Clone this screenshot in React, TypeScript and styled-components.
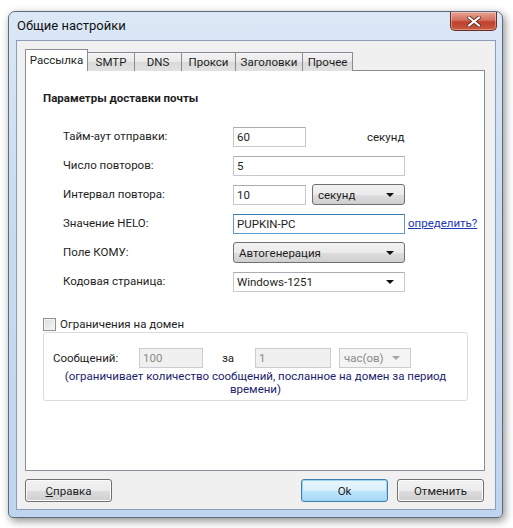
import React from 'react';
import styled, { createGlobalStyle, css } from 'styled-components';

const GlobalStyle = createGlobalStyle`
  html, body {
    margin: 0;
    padding: 0;
    background: #ffffff;
  }
  body {
    font-family: Roboto, 'Noto Sans', sans-serif;
    font-size: 11.5px;
    color: #1e1e1e;
  }
`;

const Screen = styled.div`
  width: 513px;
  height: 528px;
  padding: 11px 0 0 8px;
  box-sizing: border-box;
  overflow: hidden;
`;

const Window = styled.div`
  width: 495px;
  height: 507px;
  box-sizing: border-box;
  display: flex;
  flex-direction: column;
  border: 1px solid #5d6b7c;
  border-radius: 7px 7px 5px 5px;
  background: linear-gradient(180deg, #dbe8f6 0%, #c8dbf0 40%, #bfd5ee 100%);
  box-shadow: 2px 3px 8px rgba(0, 0, 0, 0.45);
`;

const TitleBar = styled.div`
  height: 28px;
  display: flex;
  align-items: flex-start;
  padding-left: 8px;
  padding-right: 5px;
`;

const Title = styled.span`
  margin-top: 6px;
  font-size: 13px;
  color: #111;
`;

const CloseButton = styled.div`
  margin-left: auto;
  width: 47px;
  height: 19px;
  box-sizing: border-box;
  border: 1px solid #6b2b24;
  border-top: none;
  border-radius: 0 0 5px 5px;
  background: linear-gradient(180deg, #e8a291 0%, #d4705e 45%, #c0402c 55%, #c85a40 100%);
  display: flex;
  align-items: center;
  justify-content: center;
  box-shadow: inset 0 0 0 1px rgba(255, 255, 255, 0.35);
`;

const Client = styled.div`
  flex: 1;
  margin: 0 6px 7px 7px;
  background: #f0f0f0;
  border: 1px solid #8b9fb8;
  display: flex;
  flex-direction: column;
  padding: 9px 10px 0 8px;
`;

const TabStrip = styled.div`
  display: flex;
  align-items: flex-end;
  height: 21px;
  position: relative;
  z-index: 1;
  margin-bottom: -1px;
`;

const Tab = styled.div<{ $active?: boolean; $w: number }>`
  width: ${({ $w }) => $w}px;
  box-sizing: border-box;
  height: 19px;
  border: 1px solid #898c95;
  border-bottom: none;
  margin-right: -1px;
  display: flex;
  align-items: center;
  justify-content: center;
  white-space: nowrap;
  background: linear-gradient(180deg, #f4f4f4 0%, #e9e9e9 50%, #d9d9d9 51%, #e2e2e2 100%);
  ${({ $active }) =>
    $active &&
    css`
      height: 22px;
      background: #ffffff;
      padding-bottom: 2px;
    `}
`;

const Panel = styled.div`
  height: 401px;
  box-sizing: border-box;
  background: #ffffff;
  border: 1px solid #898c95;
  padding: 19px 0 0 17px;
  display: flex;
  flex-direction: column;
`;

const Heading = styled.div`
  font-weight: bold;
  height: 17px;
  line-height: 17px;
`;

const Form = styled.div`
  margin-top: 19px;
  padding-left: 20px;
  display: grid;
  grid-template-columns: 170px 1fr;
  row-gap: 8px;
  align-items: center;
`;

const Label = styled.span`
  line-height: 21px;
`;

const Row = styled.div`
  display: flex;
  align-items: center;
  height: 21px;
`;

const TextInput = styled.div<{ $w: number; $focused?: boolean; $disabled?: boolean }>`
  width: ${({ $w }) => $w}px;
  height: 20px;
  box-sizing: border-box;
  border: 1px solid #c5c9cf;
  border-top-color: #abadb3;
  background: #fff;
  padding-left: 3px;
  display: flex;
  align-items: center;
  ${({ $focused }) =>
    $focused &&
    css`
      border-color: #5b9bd1;
      border-top-color: #3d7bad;
    `}
  ${({ $disabled }) =>
    $disabled &&
    css`
      background: #f0f0f0;
      border-color: #c9ccd0;
      color: #8a8a8a;
    `}
`;

const Combo = styled.div<{ $w: number; $plain?: boolean; $disabled?: boolean }>`
  width: ${({ $w }) => $w}px;
  height: 21px;
  box-sizing: border-box;
  border: 1px solid #707070;
  border-radius: 3px;
  padding: 0 10px 0 5px;
  display: flex;
  align-items: center;
  justify-content: space-between;
  background: linear-gradient(180deg, #f2f2f2 0%, #ebebeb 50%, #dddddd 51%, #cfcfcf 100%);
  ${({ $plain }) =>
    $plain &&
    css`
      height: 20px;
      border-radius: 0;
      border-color: #c5c9cf;
      border-top-color: #abadb3;
      background: #fff;
      padding-left: 3px;
    `}
  ${({ $disabled }) =>
    $disabled &&
    css`
      height: 20px;
      border-radius: 0;
      border-color: #c9ccd0;
      background: #f4f4f4;
      color: #8a8a8a;
      padding-left: 4px;
    `}
`;

const Arrow = styled.span<{ $disabled?: boolean }>`
  width: 0;
  height: 0;
  border-left: 4px solid transparent;
  border-right: 4px solid transparent;
  border-top: 4px solid ${({ $disabled }) => ($disabled ? '#a8a8a8' : '#111')};
`;

const Unit = styled.span`
  margin-left: 61px;
`;

const Link = styled.a`
  margin-left: 3px;
  color: #1a37b8;
  text-decoration: underline;
  margin-top: -2px;
`;

const CheckRow = styled.label`
  margin-top: 25px;
  display: flex;
  align-items: center;
  height: 14px;
  gap: 4px;
`;

const CheckBox = styled.span`
  width: 13px;
  height: 13px;
  box-sizing: border-box;
  border: 1px solid #8f8f8f;
  background: linear-gradient(135deg, #dcdcdc 0%, #f6f6f6 100%);
  box-shadow: inset 0 0 0 1px #f4f4f4;
`;

const GroupBox = styled.div`
  margin-top: 1px;
  width: 425px;
  height: 69px;
  box-sizing: border-box;
  border: 1px solid #dcdcdc;
  border-radius: 3px;
  padding: 15px 0 0 9px;
`;

const LimitRow = styled.div`
  display: grid;
  grid-template-columns: 86px 64px 52px 76px 80px;
  align-items: center;
  height: 20px;
`;

const Between = styled.span`
  padding-left: 19px;
`;

const Gap = styled.span<{ $w: number }>`
  padding-left: ${({ $w }) => $w}px;
  display: flex;
`;

const Note = styled.div`
  margin-top: 2px;
  padding-right: 9px;
  text-align: center;
  color: #1c1c6e;
  line-height: 13px;
`;

const ButtonBar = styled.div`
  margin-top: 8px;
  display: flex;
  align-items: center;
`;

const Button = styled.div<{ $default?: boolean; $ml?: number }>`
  width: 87px;
  height: 23px;
  box-sizing: border-box;
  margin-left: ${({ $ml }) => $ml || 0}px;
  border: 1px solid #707070;
  border-radius: 3px;
  display: flex;
  align-items: center;
  justify-content: center;
  background: linear-gradient(180deg, #f2f2f2 0%, #ebebeb 50%, #dddddd 51%, #cfcfcf 100%);
  box-shadow: inset 0 0 0 1px #fcfcfc;
  ${({ $default }) =>
    $default &&
    css`
      border-color: #3c7fb1;
      background: linear-gradient(180deg, #eaf6fd 0%, #d9f0fc 50%, #bee6fd 51%, #a7d9f5 100%);
      box-shadow: inset 0 0 0 1px #9fd5f2;
    `}
`;

const Mnemonic = styled.span`
  text-decoration: underline;
`;

export default function App() {
  return (
    <>
      <GlobalStyle />
      <Screen>
        <Window>
          <TitleBar>
            <Title>Общие настройки</Title>
            <CloseButton>
              <svg width="14" height="11" viewBox="0 0 14 11">
                <path
                  d="M2 1.5 L12 9.5 M12 1.5 L2 9.5"
                  stroke="#5a2a22"
                  strokeWidth="3.6"
                  strokeLinecap="round"
                />
                <path
                  d="M2 1.5 L12 9.5 M12 1.5 L2 9.5"
                  stroke="#ffffff"
                  strokeWidth="2.2"
                  strokeLinecap="round"
                />
              </svg>
            </CloseButton>
          </TitleBar>
          <Client>
            <TabStrip>
              <Tab $active $w={63}>Рассылка</Tab>
              <Tab $w={48}>SMTP</Tab>
              <Tab $w={48}>DNS</Tab>
              <Tab $w={55}>Прокси</Tab>
              <Tab $w={68}>Заголовки</Tab>
              <Tab $w={51}>Прочее</Tab>
            </TabStrip>
            <Panel>
              <Heading>Параметры доставки почты</Heading>
              <Form>
                <Label>Тайм-аут отправки:</Label>
                <Row>
                  <TextInput $w={73}>60</TextInput>
                  <Unit>секунд</Unit>
                </Row>
                <Label>Число повторов:</Label>
                <Row>
                  <TextInput $w={172}>5</TextInput>
                </Row>
                <Label>Интервал повтора:</Label>
                <Row>
                  <TextInput $w={73}>10</TextInput>
                  <Gap $w={6}>
                    <Combo $w={93}>
                      секунд
                      <Arrow />
                    </Combo>
                  </Gap>
                </Row>
                <Label>Значение HELO:</Label>
                <Row>
                  <TextInput $w={172} $focused>
                    PUPKIN-PC
                  </TextInput>
                  <Link>определить?</Link>
                </Row>
                <Label>Поле КОМУ:</Label>
                <Row>
                  <Combo $w={172}>
                    Автогенерация
                    <Arrow />
                  </Combo>
                </Row>
                <Label>Кодовая страница:</Label>
                <Row>
                  <Combo $w={172} $plain>
                    Windows-1251
                    <Arrow />
                  </Combo>
                </Row>
              </Form>
              <CheckRow>
                <CheckBox />
                Ограничения на домен
              </CheckRow>
              <GroupBox>
                <LimitRow>
                  <span>Сообщений:</span>
                  <TextInput $w={64} $disabled>
                    100
                  </TextInput>
                  <Between>за</Between>
                  <TextInput $w={76} $disabled>
                    1
                  </TextInput>
                  <Gap $w={8}>
                    <Combo $w={80} $disabled>
                      час(ов)
                      <Arrow $disabled />
                    </Combo>
                  </Gap>
                </LimitRow>
                <Note>
                  (ограничивает количество сообщений, посланное на домен за период
                  <br />
                  времени)
                </Note>
              </GroupBox>
            </Panel>
            <ButtonBar>
              <Button>
                <Mnemonic>С</Mnemonic>правка
              </Button>
              <Button $default $ml={189}>
                Ok
              </Button>
              <Button $ml={9}>Отменить</Button>
            </ButtonBar>
          </Client>
        </Window>
      </Screen>
    </>
  );
}
